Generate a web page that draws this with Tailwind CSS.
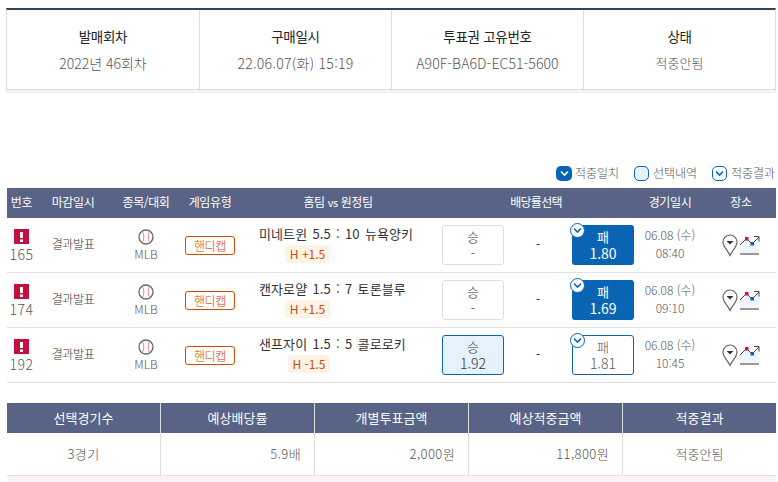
<!DOCTYPE html>
<html lang="ko"><head><meta charset="utf-8"><script src="https://cdn.jsdelivr.net/npm/@tailwindcss/browser@4"></script></head>
<body class="bg-white overflow-hidden font-['Noto_Sans_CJK_KR','Noto_Sans',sans-serif] text-[#555]">
<div class="w-[778px] h-[482px] overflow-hidden pt-[8px] pl-[6px]">
<section class="w-[770px] h-[85px] border-b-[3px] border-[#f3f3f3]">
  <div class="grid grid-cols-[193px_192px_192px_193px] h-[82px] border-t-2 border-t-[#33415f] border-b border-b-[#ddd] border-l border-l-[#ddd] border-r border-r-[#ddd]">
    <div class="flex flex-col items-center pt-[16px] border-r border-[#ddd]"><div class="text-[13.500px] tracking-[-0.300px] leading-[20px] text-[#222]">발매회차</div><div class="mt-[7px] text-[14px] leading-[20px] font-light text-[#555]">2022년 46회차</div></div>
    <div class="flex flex-col items-center pt-[16px] border-r border-[#ddd]"><div class="text-[13.500px] tracking-[-0.300px] leading-[20px] text-[#222]">구매일시</div><div class="mt-[7px] text-[14px] tracking-[0.300px] leading-[20px] font-light text-[#555]">22.06.07(화) 15:19</div></div>
    <div class="flex flex-col items-center pt-[16px] border-r border-[#ddd]"><div class="text-[13.500px] tracking-[-0.300px] leading-[20px] text-[#222]">투표권 고유번호</div><div class="mt-[7px] text-[14px] tracking-[0.100px] leading-[20px] font-light text-[#555]">A90F-BA6D-EC51-5600</div></div>
    <div class="flex flex-col items-center pt-[16px] pr-[2px]"><div class="text-[13.500px] tracking-[-0.300px] leading-[20px] text-[#222]">상태</div><div class="mt-[7px] text-[13px] tracking-[0.100px] leading-[20px] font-light text-[#555]">적중안됨</div></div>
  </div>
</section>

<div class="mt-[72px] h-[16px] pl-[550px] flex items-center">
  <div class="flex items-center w-[78px] h-[16px] shrink-0"><span class="w-[16px] h-[15px] rounded-[5px] bg-[#0a64b4] flex items-center justify-center"><svg width="9" height="7" viewBox="0 0 9 7" fill="none" stroke="#fff" stroke-width="1.6"><path d="M1 1.500 4.500 5 8 1.500"/></svg></span><span class="ml-[3px] text-[12px] font-light whitespace-nowrap">적중일치</span></div>
  <div class="flex items-center w-[78px] h-[16px] shrink-0"><span class="w-[15px] h-[15px] rounded-[5px] bg-[#e6f2fb] border border-[#0a64b4]"></span><span class="ml-[4px] text-[12px] font-light whitespace-nowrap">선택내역</span></div>
  <div class="flex items-center h-[16px] shrink-0"><span class="w-[15px] h-[15px] rounded-[5px] bg-white border border-[#0a64b4] flex items-center justify-center"><svg width="9" height="7" viewBox="0 0 9 7" fill="none" stroke="#0a64b4" stroke-width="1.6"><path d="M1 1.500 4.500 5 8 1.500"/></svg></span><span class="ml-[4px] text-[12px] font-light whitespace-nowrap">적중결과</span></div>
</div>

<div class="mt-[7px] ml-[1px] w-[769px]">
  <div class="grid grid-cols-[29px_74px_72px_56px_200px_196px_72px_70px] h-[30px] pb-[2px] bg-[#586385] text-white text-[12px] tracking-[-0.400px] items-center text-center">
    <div>번호</div><div>마감일시</div><div>종목/대회</div><div>게임유형</div><div>홈팀 <span class="text-[11px]">vs</span> 원정팀</div><div class="tracking-[-0.700px]">배당률선택</div><div>경기일시</div><div>장소</div>
  </div>

  <div class="grid grid-cols-[29px_74px_72px_56px_200px_196px_72px_70px] h-[55px] border-b border-[#e2e2e2] items-center text-center">
    <div class="flex flex-col items-center pt-[2px]"><span class="w-[15px] h-[15px] bg-[#c3103f] text-white flex items-center justify-center"><svg width="3" height="10" viewBox="0 0 3 10" fill="#fff"><rect width="3" height="6"/><rect y="7.5" width="3" height="2.5"/></svg></span><span class="text-[14px] tracking-[0.500px] leading-[18px] font-light mt-[1px]">165</span></div>
    <div class="text-[12px] tracking-[-0.400px] font-light text-[#333] pb-[2px]">결과발표</div>
    <div class="flex flex-col items-center"><svg width="16" height="16" viewBox="0 0 16 16" fill="none"><circle cx="8" cy="8" r="7" stroke="#666" stroke-width="1.3"/><path d="M4.500 2.500C6.300 5.500 6.300 10.500 4.500 13.500M11.500 2.500C9.700 5.500 9.700 10.500 11.500 13.500" stroke="#e58a8a" stroke-width="1"/></svg><span class="text-[12px] leading-[16px] font-light mt-[1px]">MLB</span></div>
    <div class="flex justify-center"><span class="w-[50px] h-[19px] border border-[#cf4a00] rounded-[3px] text-[#cf4a00] text-[12px] tracking-[-0.300px] leading-[17px] font-light">핸디캡</span></div>
    <div class="flex flex-col items-start pl-[21px] pb-[3px]"><span class="text-[13px] tracking-[0.100px] [word-spacing:1.500px] leading-[20px] text-[#333] whitespace-nowrap">미네트윈 5.5 : 10 뉴욕양키</span><span class="ml-[26px] mt-[1px] h-[18px] w-[45px] rounded-[3px] bg-[#fff3e6] text-[#cf4a00] text-[12px] leading-[18px]">H +1.5</span></div>
    <div class="flex items-center pl-[4px]">
      <div class="w-[62px] h-[40px] border border-[#ddd] rounded-[3px] flex flex-col items-center justify-center text-[13px] leading-[16px] font-light text-[#333]"><span>승</span><span>-</span></div>
      <div class="w-[68px] text-[12px] text-[#222] pb-[2px]">-</div>
      <div class="relative w-[62px] h-[40px] bg-[#0a64b4] rounded-[3px] flex flex-col items-center justify-center text-white text-[13px] leading-[16px]"><span class="absolute -left-[2px] -top-[2px] w-[15px] h-[15px] rounded-full bg-white border border-[#0a64b4] flex items-center justify-center"><svg width="9" height="7" viewBox="0 0 9 7" fill="none" stroke="#0a64b4" stroke-width="1.6"><path d="M1 1.500 4.500 5 8 1.500"/></svg></span><span>패</span><span class="text-[14px]">1.80</span></div>
    </div>
    <div class="flex flex-col items-center text-[12px] leading-[18px] font-light pb-[2px]"><span>06.08 (수)</span><span>08:40</span></div>
    <div class="flex items-center justify-center gap-[2px]">
      <svg width="16" height="23" viewBox="0 0 16 23" fill="none"><path d="M8 21.500C5.500 16 1 13 1 8a7 7 0 0 1 14 0C15 13 10.500 16 8 21.500Z" stroke="#666" stroke-width="1.200"/><path d="M4.500 7h7L8 10.500Z" fill="#333"/></svg>
      <svg width="20" height="20" viewBox="0 0 20 20" fill="none"><path d="M0 10 6.500 3.500 12 9 19 2v16H0Z" fill="#eef5fc"/><path d="M0 10 6.500 3.500 12 9 19 2M14 1.500h5v5" stroke="#444" stroke-width="1"/><path d="M0 19h19" stroke="#555" stroke-width="1.200"/><rect x="5" y="2" width="3.500" height="3.500" fill="#e0102a"/><rect x="10.500" y="7" width="3.500" height="3.500" fill="#0a64b4"/></svg>
    </div>
  </div>

  <div class="grid grid-cols-[29px_74px_72px_56px_200px_196px_72px_70px] h-[55px] border-b border-[#e2e2e2] items-center text-center">
    <div class="flex flex-col items-center pt-[2px]"><span class="w-[15px] h-[15px] bg-[#c3103f] text-white flex items-center justify-center"><svg width="3" height="10" viewBox="0 0 3 10" fill="#fff"><rect width="3" height="6"/><rect y="7.5" width="3" height="2.5"/></svg></span><span class="text-[14px] tracking-[0.500px] leading-[18px] font-light mt-[1px]">174</span></div>
    <div class="text-[12px] tracking-[-0.400px] font-light text-[#333] pb-[2px]">결과발표</div>
    <div class="flex flex-col items-center"><svg width="16" height="16" viewBox="0 0 16 16" fill="none"><circle cx="8" cy="8" r="7" stroke="#666" stroke-width="1.3"/><path d="M4.500 2.500C6.300 5.500 6.300 10.500 4.500 13.500M11.500 2.500C9.700 5.500 9.700 10.500 11.500 13.500" stroke="#e58a8a" stroke-width="1"/></svg><span class="text-[12px] leading-[16px] font-light mt-[1px]">MLB</span></div>
    <div class="flex justify-center"><span class="w-[50px] h-[19px] border border-[#cf4a00] rounded-[3px] text-[#cf4a00] text-[12px] tracking-[-0.300px] leading-[17px] font-light">핸디캡</span></div>
    <div class="flex flex-col items-start pl-[21px] pb-[3px]"><span class="text-[13px] tracking-[0.100px] [word-spacing:1.500px] leading-[20px] text-[#333] whitespace-nowrap">캔자로얄 1.5 : 7 토론블루</span><span class="ml-[26px] mt-[1px] h-[18px] w-[45px] rounded-[3px] bg-[#fff3e6] text-[#cf4a00] text-[12px] leading-[18px]">H +1.5</span></div>
    <div class="flex items-center pl-[4px]">
      <div class="w-[62px] h-[40px] border border-[#ddd] rounded-[3px] flex flex-col items-center justify-center text-[13px] leading-[16px] font-light text-[#333]"><span>승</span><span>-</span></div>
      <div class="w-[68px] text-[12px] text-[#222] pb-[2px]">-</div>
      <div class="relative w-[62px] h-[40px] bg-[#0a64b4] rounded-[3px] flex flex-col items-center justify-center text-white text-[13px] leading-[16px]"><span class="absolute -left-[2px] -top-[2px] w-[15px] h-[15px] rounded-full bg-white border border-[#0a64b4] flex items-center justify-center"><svg width="9" height="7" viewBox="0 0 9 7" fill="none" stroke="#0a64b4" stroke-width="1.6"><path d="M1 1.500 4.500 5 8 1.500"/></svg></span><span>패</span><span class="text-[14px]">1.69</span></div>
    </div>
    <div class="flex flex-col items-center text-[12px] leading-[18px] font-light pb-[2px]"><span>06.08 (수)</span><span>09:10</span></div>
    <div class="flex items-center justify-center gap-[2px]">
      <svg width="16" height="23" viewBox="0 0 16 23" fill="none"><path d="M8 21.500C5.500 16 1 13 1 8a7 7 0 0 1 14 0C15 13 10.500 16 8 21.500Z" stroke="#666" stroke-width="1.200"/><path d="M4.500 7h7L8 10.500Z" fill="#333"/></svg>
      <svg width="20" height="20" viewBox="0 0 20 20" fill="none"><path d="M0 10 6.500 3.500 12 9 19 2v16H0Z" fill="#eef5fc"/><path d="M0 10 6.500 3.500 12 9 19 2M14 1.500h5v5" stroke="#444" stroke-width="1"/><path d="M0 19h19" stroke="#555" stroke-width="1.200"/><rect x="5" y="2" width="3.500" height="3.500" fill="#e0102a"/><rect x="10.500" y="7" width="3.500" height="3.500" fill="#0a64b4"/></svg>
    </div>
  </div>

  <div class="grid grid-cols-[29px_74px_72px_56px_200px_196px_72px_70px] h-[55px] border-b border-[#e2e2e2] items-center text-center">
    <div class="flex flex-col items-center pt-[2px]"><span class="w-[15px] h-[15px] bg-[#c3103f] text-white flex items-center justify-center"><svg width="3" height="10" viewBox="0 0 3 10" fill="#fff"><rect width="3" height="6"/><rect y="7.5" width="3" height="2.5"/></svg></span><span class="text-[14px] tracking-[0.500px] leading-[18px] font-light mt-[1px]">192</span></div>
    <div class="text-[12px] tracking-[-0.400px] font-light text-[#333] pb-[2px]">결과발표</div>
    <div class="flex flex-col items-center"><svg width="16" height="16" viewBox="0 0 16 16" fill="none"><circle cx="8" cy="8" r="7" stroke="#666" stroke-width="1.3"/><path d="M4.500 2.500C6.300 5.500 6.300 10.500 4.500 13.500M11.500 2.500C9.700 5.500 9.700 10.500 11.500 13.500" stroke="#e58a8a" stroke-width="1"/></svg><span class="text-[12px] leading-[16px] font-light mt-[1px]">MLB</span></div>
    <div class="flex justify-center"><span class="w-[50px] h-[19px] border border-[#cf4a00] rounded-[3px] text-[#cf4a00] text-[12px] tracking-[-0.300px] leading-[17px] font-light">핸디캡</span></div>
    <div class="flex flex-col items-start pl-[21px] pb-[3px]"><span class="text-[13px] tracking-[0.100px] [word-spacing:1.500px] leading-[20px] text-[#333] whitespace-nowrap">샌프자이 1.5 : 5 콜로로키</span><span class="ml-[29px] mt-[1px] h-[18px] w-[42px] rounded-[3px] bg-[#fff3e6] text-[#cf4a00] text-[12px] leading-[18px]">H -1.5</span></div>
    <div class="flex items-center pl-[4px]">
      <div class="w-[62px] h-[40px] border border-[#0a64b4] bg-[#e6f2fb] rounded-[3px] flex flex-col items-center justify-center text-[13px] leading-[16px] font-light text-[#333]"><span>승</span><span class="text-[14px]">1.92</span></div>
      <div class="w-[68px] text-[12px] text-[#222] pb-[2px]">-</div>
      <div class="relative w-[62px] h-[40px] border border-[#0a64b4] rounded-[3px] flex flex-col items-center justify-center text-[#555] font-light text-[13px] leading-[16px]"><span class="absolute -left-[3px] -top-[3px] w-[15px] h-[15px] rounded-full bg-white border border-[#0a64b4] flex items-center justify-center"><svg width="9" height="7" viewBox="0 0 9 7" fill="none" stroke="#0a64b4" stroke-width="1.6"><path d="M1 1.500 4.500 5 8 1.500"/></svg></span><span>패</span><span class="text-[14px]">1.81</span></div>
    </div>
    <div class="flex flex-col items-center text-[12px] leading-[18px] font-light pb-[2px]"><span>06.08 (수)</span><span>10:45</span></div>
    <div class="flex items-center justify-center gap-[2px]">
      <svg width="16" height="23" viewBox="0 0 16 23" fill="none"><path d="M8 21.500C5.500 16 1 13 1 8a7 7 0 0 1 14 0C15 13 10.500 16 8 21.500Z" stroke="#666" stroke-width="1.200"/><path d="M4.500 7h7L8 10.500Z" fill="#333"/></svg>
      <svg width="20" height="20" viewBox="0 0 20 20" fill="none"><path d="M0 10 6.500 3.500 12 9 19 2v16H0Z" fill="#eef5fc"/><path d="M0 10 6.500 3.500 12 9 19 2M14 1.500h5v5" stroke="#444" stroke-width="1"/><path d="M0 19h19" stroke="#555" stroke-width="1.200"/><rect x="5" y="2" width="3.500" height="3.500" fill="#e0102a"/><rect x="10.500" y="7" width="3.500" height="3.500" fill="#0a64b4"/></svg>
    </div>
  </div>

  <div class="mt-[20px] grid grid-cols-[154px_154px_154px_154px_153px] h-[30px] bg-[#586385] text-white text-[13px] items-center text-center">
    <div class="h-full flex items-center justify-center border-r border-[#ddd]">선택경기수</div><div class="h-full flex items-center justify-center border-r border-[#ddd]">예상배당률</div><div class="h-full flex items-center justify-center border-r border-[#ddd]">개별투표금액</div><div class="h-full flex items-center justify-center border-r border-[#ddd]">예상적중금액</div><div>적중결과</div>
  </div>
  <div class="grid grid-cols-[154px_154px_154px_154px_153px] h-[43px] border-b border-[#e2e2e2] text-[13px] font-light tracking-[0.400px]">
    <div class="h-full flex items-center justify-center border-r border-[#ddd]">3경기</div><div class="h-full flex items-center justify-end pr-[13px] border-r border-[#ddd]">5.9배</div><div class="h-full flex items-center justify-end pr-[13px] border-r border-[#ddd]">2,000원</div><div class="h-full flex items-center justify-end pr-[13px] border-r border-[#ddd]">11,800원</div><div class="h-full flex items-center justify-center tracking-normal">적중안됨</div>
  </div>
  <div class="h-[10px] bg-[#fdf2f4]"></div>
</div>
</div>
</body></html>
